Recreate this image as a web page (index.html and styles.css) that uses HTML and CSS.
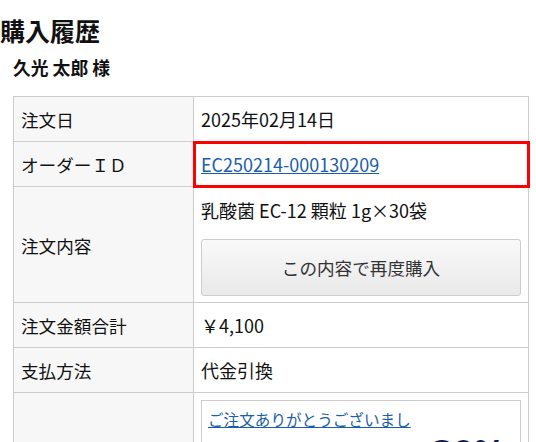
FILE: index.html
```html
<!DOCTYPE html>
<html lang="ja">
<head>
<meta charset="utf-8">
<link rel="stylesheet" href="styles.css">
</head>
<body>
<h1 class="title">購入履歴</h1>
<p class="customer">久光 太郎 様</p>
<table class="history">
  <tr>
    <th class="label">注文日</th>
    <td class="value">2025年02月14日</td>
  </tr>
  <tr>
    <th class="label">オーダーＩＤ</th>
    <td class="value highlight"><a class="link" href="#">EC250214-000130209</a></td>
  </tr>
  <tr>
    <th class="label">注文内容</th>
    <td class="value items">
      <div class="item">乳酸菌 EC-12 顆粒 1g×30袋</div>
      <button class="rebuy" type="button">この内容で再度購入</button>
    </td>
  </tr>
  <tr>
    <th class="label">注文金額合計</th>
    <td class="value">￥4,100</td>
  </tr>
  <tr>
    <th class="label">支払方法</th>
    <td class="value">代金引換</td>
  </tr>
  <tr>
    <th class="label"></th>
    <td class="value promo-cell">
      <div class="promo">
        <a class="link promo-link" href="#">ご注文ありがとうございまし</a>
        <div class="promo-line">
          <span class="promo-small">次回ご購入時にご利用いただける</span>
          <span class="promo-big">30%</span>
        </div>
      </div>
    </td>
  </tr>
</table>
</body>
</html>
```

FILE: styles.css
```css
html, body {
  margin: 0;
  padding: 0;
  background: #fff;
}
body {
  font-family: "Noto Sans CJK JP", "Noto Sans", sans-serif;
  font-size: 18px;
  line-height: 25px;
  color: #111;
}
.title {
  margin: 12px 0 0 0;
  font-size: 25px;
  line-height: 36px;
  font-weight: bold;
}
.customer {
  margin: 7px 0 0 13px;
  font-size: 17.8px;
  line-height: 25px;
  font-weight: bold;
}
.history {
  margin: 16px 0 0 13px;
  width: 516px;
  border-collapse: collapse;
  table-layout: fixed;
}
.label, .value {
  border: 1px solid #ccc;
  padding: 10px 7px 9px;
  text-align: left;
  vertical-align: middle;
  font-weight: normal;
}
.label {
  width: 165px;
  background: #f7f7f7;
  font-size: 17.6px;
}
.value {
  background: #fff;
}
.highlight {
  outline: 3px solid #f00;
  outline-offset: -2px;
}
.link {
  color: #1c5ea8;
  text-decoration: underline;
}
.items {
  padding-top: 11px;
  padding-bottom: 6px;
}
.rebuy {
  display: block;
  width: 100%;
  height: 57px;
  margin-top: 16px;
  border: 1px solid #ccc;
  border-radius: 3px;
  background: linear-gradient(#f9f9f9, #e9e9e9);
  font-family: "Noto Sans CJK JP", "Noto Sans", sans-serif;
  font-size: 17.6px;
  color: #333;
}
.promo-cell {
  padding-top: 7px;
  vertical-align: top;
}
.promo {
  border: 1px solid #ccc;
  padding: 5px 6px 4px;
}
.promo-link {
  font-size: 15.6px;
  line-height: 24px;
}
.promo-line {
  display: flex;
  align-items: center;
  justify-content: flex-end;
  gap: 12px;
  margin-top: 2px;
}
.promo-small {
  font-size: 12px;
  color: #888;
}
.promo-big {
  font-family: "Noto Sans", sans-serif;
  font-size: 36px;
  line-height: 40px;
  font-weight: bold;
  color: #14204a;
  margin-right: 8px;
}
```
